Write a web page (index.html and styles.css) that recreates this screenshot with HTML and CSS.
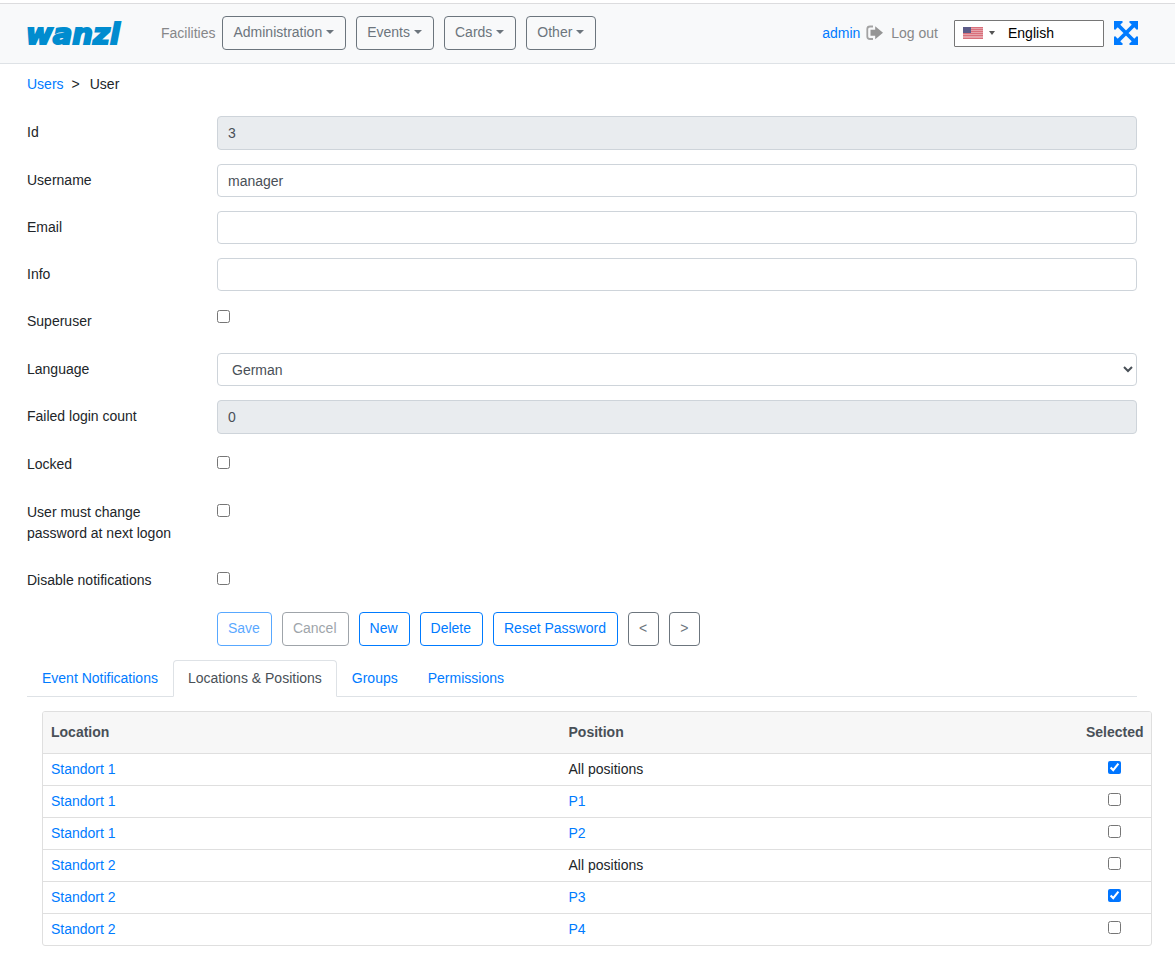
FILE: index.html
```html
<!DOCTYPE html>
<html lang="en">
<head>
<meta charset="utf-8">
<meta name="viewport" content="width=device-width, initial-scale=1">
<title>User</title>
<link rel="stylesheet" href="styles.css">
</head>
<body>
<header class="navbar">
  <a class="brand" href="#">wanzl</a>
  <nav class="menu">
    <a class="muted-link" href="#">Facilities</a>
    <div class="menu-buttons">
      <button class="btn btn-secondary caret" type="button">Administration</button>
      <button class="btn btn-secondary caret" type="button">Events</button>
      <button class="btn btn-secondary caret" type="button">Cards</button>
      <button class="btn btn-secondary caret" type="button">Other</button>
    </div>
  </nav>
  <div class="account">
    <a href="#">admin</a>
    <a class="muted-link logout" href="#">
      <svg class="logout-icon" width="18" height="16" viewBox="0 0 18 16" aria-hidden="true">
        <path d="M7 1.500H4Q1.300 1.500 1.300 4V11.500Q1.300 14 4 14H7" fill="none" stroke="#a3a3a3" stroke-width="1.800"/>
        <path d="M4.500 4.800H9.200V1.300L17 7.700L9.200 14.200V10.700H4.500Z" fill="#959595"/>
      </svg>
      Log out</a>
  </div>
  <div class="lang-picker">
    <button class="flag-button" type="button" aria-label="Choose language">
      <svg width="20" height="12" viewBox="0 0 20 12" aria-hidden="true">
        <path fill="#e5a3ab" d="M0 0h20v12H0z"/>
        <path fill="#d96f7b" d="M0 0h20v1H0zM0 2h20v1H0zM0 4h20v1H0zM0 6h20v1H0zM0 8h20v1H0zM0 11h20v1H0z"/>
        <path fill="#5c5b88" d="M0 0h8v6H0z"/>
      </svg>
      <span class="flag-caret"></span>
    </button>
    <input class="lang-input" type="text" value="English" aria-label="Language" size="8">
  </div>
  <button class="expand" type="button" aria-label="Full screen">
    <svg width="24" height="24" viewBox="0 0 24 24" aria-hidden="true">
      <path d="M4 4L20 20M20 4L4 20" stroke="#007bff" stroke-width="3.800"/>
      <path fill="#007bff" d="M0 0H8L9 1L1 9L0 8ZM16 0H24V8L23 9L15 1ZM0 16L1 15L9 23L8 24H0ZM24 16V24H16L15 23L23 15Z"/>
    </svg>
  </button>
</header>

<main class="page">
  <nav class="breadcrumb" aria-label="Breadcrumb">
    <a href="#">Users</a><span>&gt;</span><span>User</span>
  </nav>

  <form class="form">
    <div class="row"><label for="id">Id</label><input class="control" id="id" type="text" value="3" readonly></div>
    <div class="row"><label for="username">Username</label><input class="control" id="username" type="text" value="manager"></div>
    <div class="row"><label for="email">Email</label><input class="control" id="email" type="text"></div>
    <div class="row"><label for="info">Info</label><input class="control" id="info" type="text"></div>
    <div class="row row-check row-check-high"><label for="superuser">Superuser</label><input id="superuser" type="checkbox"></div>
    <div class="row"><label for="language">Language</label><select class="control" id="language"><option>German</option><option>English</option></select></div>
    <div class="row"><label for="failed">Failed login count</label><input class="control" id="failed" type="text" value="0" readonly></div>
    <div class="row row-check"><label for="locked">Locked</label><input id="locked" type="checkbox"></div>
    <div class="row row-check"><label for="change">User must change password at next logon</label><input id="change" type="checkbox"></div>
    <div class="row row-check"><label for="disable">Disable notifications</label><input id="disable" type="checkbox"></div>
    <div class="actions">
      <button class="btn btn-primary" type="button" disabled>Save</button>
      <button class="btn btn-secondary" type="button" disabled>Cancel</button>
      <button class="btn btn-primary" type="button">New</button>
      <button class="btn btn-primary" type="button">Delete</button>
      <button class="btn btn-primary" type="button">Reset Password</button>
      <button class="btn btn-secondary" type="button">&lt;</button>
      <button class="btn btn-secondary" type="button">&gt;</button>
    </div>
  </form>

  <nav class="tabs">
    <a class="tab" href="#">Event Notifications</a>
    <a class="tab tab-active" href="#">Locations &amp; Positions</a>
    <a class="tab" href="#">Groups</a>
    <a class="tab" href="#">Permissions</a>
  </nav>

  <div class="table-box">
    <table class="table">
      <thead>
        <tr><th>Location</th><th>Position</th><th class="col-selected">Selected</th></tr>
      </thead>
      <tbody>
        <tr><td><a href="#">Standort 1</a></td><td>All positions</td><td class="col-selected"><input type="checkbox" aria-label="Standort 1, all positions" checked></td></tr>
        <tr><td><a href="#">Standort 1</a></td><td><a href="#">P1</a></td><td class="col-selected"><input type="checkbox" aria-label="Standort 1, P1"></td></tr>
        <tr><td><a href="#">Standort 1</a></td><td><a href="#">P2</a></td><td class="col-selected"><input type="checkbox" aria-label="Standort 1, P2"></td></tr>
        <tr><td><a href="#">Standort 2</a></td><td>All positions</td><td class="col-selected"><input type="checkbox" aria-label="Standort 2, all positions"></td></tr>
        <tr><td><a href="#">Standort 2</a></td><td><a href="#">P3</a></td><td class="col-selected"><input type="checkbox" aria-label="Standort 2, P3" checked></td></tr>
        <tr><td><a href="#">Standort 2</a></td><td><a href="#">P4</a></td><td class="col-selected"><input type="checkbox" aria-label="Standort 2, P4"></td></tr>
      </tbody>
    </table>
  </div>
</main>
</body>
</html>
```
FILE: styles.css
```css
* {
  box-sizing: border-box;
}

body {
  margin: 0;
  padding-top: 3px;
  background: #fff;
  color: #212529;
  font: 14px/21px "Liberation Sans", Arial, sans-serif;
}

a {
  color: #007bff;
  text-decoration: none;
}

button,
input,
select {
  margin: 0;
  font: inherit;
}

input[type="checkbox"] {
  width: 13px;
  height: 13px;
  accent-color: #0075ff;
}

/* Top bar */
.navbar {
  display: flex;
  align-items: center;
  padding: 12px 37px 13px 26px;
  border-top: 1px solid #dcdcde;
  border-bottom: 1px solid #dee2e6;
  background: #f8f9fa;
}

.brand {
  width: 135px;
  padding-top: 2px;
  color: #008ccf;
  font: italic bold 29px/32px "DejaVu Sans", sans-serif;
  -webkit-text-stroke: 2px #008ccf;
}

.menu {
  display: flex;
  flex: 1;
  align-items: center;
  gap: 7px;
}

.menu-buttons,
.actions {
  display: flex;
  gap: 10px;
}

.muted-link {
  color: #868789;
}

.account {
  display: flex;
  gap: 6px;
  margin-right: 16px;
}

.logout {
  display: flex;
  align-items: center;
  gap: 7px;
}

.lang-picker {
  display: flex;
  width: 150px;
  height: 27px;
  margin-right: 10px;
  border: 1px solid #767676;
  border-radius: 1px;
  background: #fff;
}

.flag-button {
  display: flex;
  flex: none;
  align-items: center;
  gap: 6px;
  padding: 0 13px 0 8px;
  border: 0;
  background: none;
}

.flag-caret {
  border: 3px solid transparent;
  border-top: 4px solid #555;
  border-bottom: 0;
}

.lang-input {
  min-width: 0;
  flex: 1;
  padding: 0;
  border: 0;
  background: none;
  color: #000;
}

.expand {
  display: flex;
  padding: 0;
  border: 0;
  background: none;
}

/* Buttons */
.btn {
  padding: 5px 11px 6px 10px;
  border: 1px solid;
  border-radius: 4px;
  background: transparent;
}

.btn-primary {
  border-color: #007bff;
  color: #007bff;
}

.btn-secondary {
  border-color: #6c757d;
  color: #6c757d;
}

.btn:disabled {
  opacity: 0.65;
}

.caret::after {
  display: inline-block;
  margin-left: 4px;
  border: 4px solid transparent;
  border-top-color: currentColor;
  border-bottom: 0;
  vertical-align: 3px;
  content: "";
}

/* Page body */
.page {
  padding: 10px 38px 17px 27px;
}

.breadcrumb {
  display: flex;
  margin-bottom: 21px;
}

.breadcrumb a {
  margin-right: 8px;
}

.breadcrumb span + span {
  margin-left: 10px;
}

.form {
  display: flex;
  flex-direction: column;
  gap: 14px;
}

.row {
  display: grid;
  grid-template-columns: 190px 1fr;
  align-items: start;
}

.row label {
  padding: 6px 30px 0 0;
}

.row-check {
  min-height: 34px;
}

.row-check label {
  padding-bottom: 6px;
}

.row-check input {
  margin-top: 8px;
}

.row-check-high input {
  margin-top: 5px;
}

.control {
  width: 100%;
  height: 33px;
  padding: 5px 10px;
  border: 1px solid #ced4da;
  border-radius: 4px;
  background: #fff;
  color: #495057;
}

.control:read-only:not(select) {
  height: 34px;
  background: #e9ecef;
}

.actions {
  padding-left: 190px;
}

/* Tabs */
.tabs {
  display: flex;
  margin: 14px 0;
  border-bottom: 1px solid #dee2e6;
}

.tab {
  margin-bottom: -1px;
  padding: 7px 14px;
  border: 1px solid transparent;
  border-radius: 4px 4px 0 0;
}

.tab-active {
  border-color: #dee2e6 #dee2e6 #fff;
  background: #fff;
  color: #495057;
}

/* Positions table */
.table-box {
  margin: 0 -15px 0 15px;
  overflow: hidden;
  border: 1px solid #dfdfdf;
  border-radius: 3px;
}

.table {
  width: 100%;
  border-spacing: 0;
  table-layout: fixed;
}

.table th {
  padding: 10px 8px;
  background: #f7f7f7;
  color: #495057;
  text-align: left;
}

.table td {
  padding: 5px 8px;
  border-top: 1px solid #dfdfdf;
}

.table .col-selected {
  width: 73px;
  text-align: center;
}

.table td input {
  display: block;
  margin: 0 auto 4px;
}
```
